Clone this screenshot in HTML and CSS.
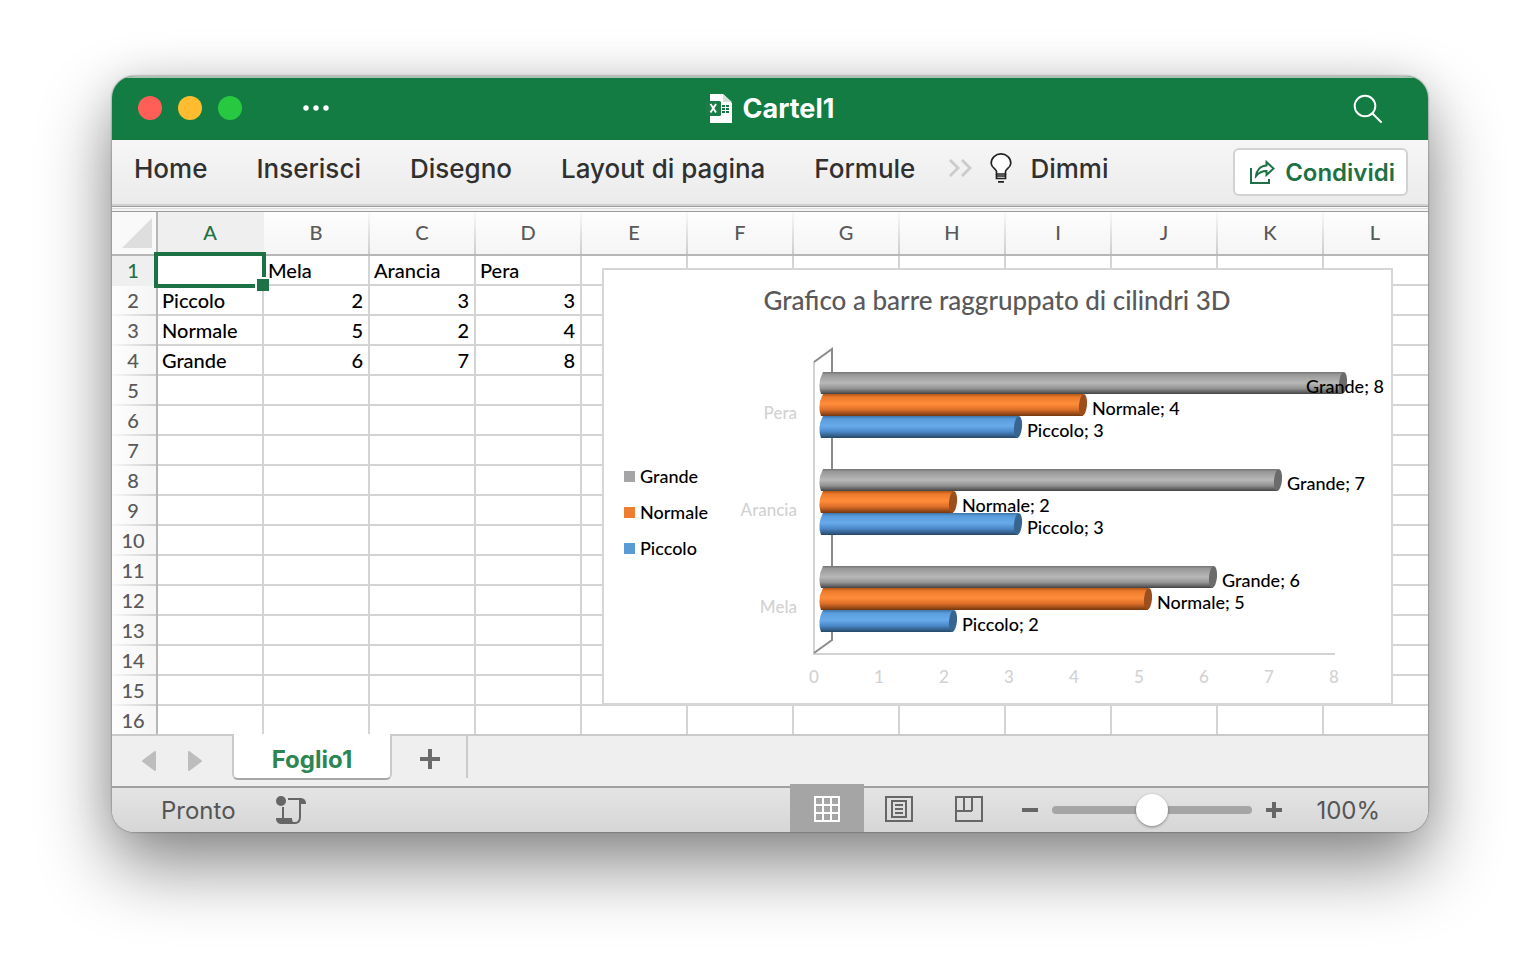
FILE: index.html
```html
<!DOCTYPE html>
<html lang="it">
<head>
    <meta charset="UTF-8">
    <meta name="viewport" content="width=device-width, initial-scale=1.0">
    <title>Cartel1</title>
    <link rel="stylesheet" href="styles.css">
</head>
<body>
    <main class="window">
        <!-- Title bar -->
        <header class="titlebar">
            <div class="controls">
                <button class="dot red" aria-label="Chiudi"></button>
                <button class="dot yellow" aria-label="Riduci"></button>
                <button class="dot green" aria-label="Ingrandisci"></button>
                <button class="more" aria-label="Altro">
                    <svg width="26" height="6" viewBox="0 0 26 6" fill="#fff"><circle cx="3" cy="3" r="2.7"/><circle cx="13" cy="3" r="2.7"/><circle cx="23" cy="3" r="2.7"/></svg>
                </button>
            </div>
            <h1 class="title">
                <svg width="26" height="30" viewBox="0 0 26 30">
                    <path d="M4 0h13l9 9v20H4z" fill="#fff"/>
                    <path d="M17 0v8h9z" fill="#cfe0d6"/>
                    <rect x="0" y="7" width="15" height="15" rx="1.5" fill="#1c7c47"/>
                    <path d="M4.500 10l5.500 8.500M10 10l-5.500 8.500" stroke="#fff" stroke-width="1.900"/>
                    <path d="M16 11h3v2h-3zM20 11h3v2h-3zM16 14h3v2h-3zM20 14h3v2h-3zM16 17h3v2h-3zM20 17h3v2h-3z" fill="#17733f"/>
                </svg>
                Cartel1
            </h1>
            <button class="search" aria-label="Cerca">
                <svg width="30" height="30" viewBox="0 0 30 30" fill="none" stroke="#fff" stroke-width="2" stroke-linecap="round"><circle cx="12" cy="12" r="10.300"/><path d="M19.500 19.500l8.500 8.500"/></svg>
            </button>
        </header>

        <!-- Ribbon tabs -->
        <div class="ribbon">
            <nav class="ribbon-tabs">
                <button>Home</button>
                <button>Inserisci</button>
                <button>Disegno</button>
                <button>Layout di pagina</button>
                <button>Formule</button>
            </nav>
            <button class="overflow" aria-label="Altre schede">
                <svg width="24" height="18" viewBox="0 0 24 18" fill="none" stroke="#cbcbcb" stroke-width="2.800"><path d="M2 1l8 8-8 8M14 1l8 8-8 8"/></svg>
            </button>
            <button class="tell">
                <svg width="22" height="30" viewBox="0 0 22 30" fill="none" stroke="#222" stroke-width="1.700">
                    <path d="M6.500 21v-2.500C6.500 16 1.200 14.800 1.200 10.200a9.800 9.300 0 0 1 19.600 0c0 4.600-5.300 5.800-5.300 8.300V21z" fill="#fff"/>
                    <path d="M6.500 21v4.500h9V21M6.500 23h9M8 28.800h6"/>
                </svg>
                Dimmi
            </button>
            <button class="share">
                <svg width="26" height="26" viewBox="0 0 26 26" fill="none" stroke="#1e7145" stroke-width="2">
                    <path d="M2 9v15h18v-4"/>
                    <path d="M17.500 3l7 6.500-7 6.500v-4c-4.500 0-7.500 1.500-10.500 5 .5-6 4.500-10.300 10.500-10.500z"/>
                </svg>
                Condividi
            </button>
        </div>
        <div class="splitter"></div>

        <!-- Worksheet -->
        <section class="sheet">
            <table>
                <colgroup>
                    <col class="col-index">
                    <col span="11" class="col-cell">
                    <col>
                </colgroup>
                <thead><tr id="letters"><th class="corner"><svg width="30" height="30" viewBox="0 0 30 30"><path d="M30 0v30H0z" fill="#dedede"/></svg></th></tr></thead>
                <tbody id="rows"></tbody>
            </table>
            <figure class="chart">
                <svg id="chart" width="787" height="433" viewBox="604 270 787 433" role="img" aria-label="Grafico a barre raggruppato di cilindri 3D">
                    <defs>
                        <linearGradient id="grande" x2="0" y2="1">
                            <stop offset="0" stop-color="#747474"/><stop offset=".12" stop-color="#989898"/><stop offset=".5" stop-color="#b8b8b8"/><stop offset=".75" stop-color="#939393"/><stop offset="1" stop-color="#444"/>
                        </linearGradient>
                        <linearGradient id="normale" x2="0" y2="1">
                            <stop offset="0" stop-color="#b45514"/><stop offset=".14" stop-color="#ec7a2c"/><stop offset=".45" stop-color="#ff8d3a"/><stop offset=".7" stop-color="#e07029"/><stop offset="1" stop-color="#74370f"/>
                        </linearGradient>
                        <linearGradient id="piccolo" x2="0" y2="1">
                            <stop offset="0" stop-color="#3d74a8"/><stop offset=".14" stop-color="#5a9cdb"/><stop offset=".45" stop-color="#68abeb"/><stop offset=".7" stop-color="#4c8aca"/><stop offset="1" stop-color="#264868"/>
                        </linearGradient>
                    </defs>
                    <text class="chart-title" x="997" y="310">Grafico a barre raggruppato di cilindri 3D</text>
                    <g fill="none" stroke-width="2">
                        <path d="M814 362v292h521" stroke="#d3d3d3"/>
                        <path d="M814 362l18-13v291l-18 13" stroke="#8b8b8b"/>
                    </g>
                </svg>
            </figure>
        </section>

        <!-- Sheet tabs -->
        <nav class="tabs">
            <button class="arrow" aria-label="Foglio precedente"><svg width="14" height="20" viewBox="0 0 14 20"><path d="M13 1v18L1 10z" fill="#bdbdbd" stroke="#bdbdbd" stroke-width="2" stroke-linejoin="round"/></svg></button>
            <button class="arrow" aria-label="Foglio successivo"><svg width="14" height="20" viewBox="0 0 14 20"><path d="M1 1v18l12-9z" fill="#bdbdbd" stroke="#bdbdbd" stroke-width="2" stroke-linejoin="round"/></svg></button>
            <button class="tab">Foglio1</button>
            <button class="add" aria-label="Nuovo foglio"><svg width="20" height="20" viewBox="0 0 20 20"><path d="M10 0v20M0 10h20" stroke="#6b6b6b" stroke-width="4"/></svg></button>
        </nav>

        <!-- Status bar -->
        <footer class="status">
            <span class="ready">Pronto</span>
            <button class="macro" aria-label="Registra macro">
                <svg width="30" height="28" viewBox="0 0 30 28">
                    <circle cx="5" cy="5" r="5" fill="#666"/>
                    <path d="M12 3h13M7 11v12M24 4v17c0 4-2 6-5 6H6" fill="none" stroke="#666" stroke-width="2"/>
                    <path d="M24 2c4 0 6 2 6 6h-6zM0 22h16c0 3 1 5 3 6H6c-4 0-6-2-6-6z" fill="#666"/>
                </svg>
            </button>
            <div class="views">
                <button class="active" aria-label="Normale">
                    <svg width="28" height="26" viewBox="0 0 28 26" fill="none" stroke="#fff" stroke-width="2"><rect x="2" y="1" width="24" height="24"/><path d="M10 1v24M18 1v24M2 9h24M2 17h24"/></svg>
                </button>
                <button aria-label="Layout di pagina">
                    <svg width="28" height="26" viewBox="0 0 28 26" fill="none" stroke="#666" stroke-width="2"><rect x="1" y="1" width="26" height="24"/><rect x="7" y="5" width="14" height="16"/><path d="M10 9h8M10 13h8M10 17h8"/></svg>
                </button>
                <button aria-label="Anteprima interruzioni di pagina">
                    <svg width="28" height="26" viewBox="0 0 28 26" fill="none" stroke="#666" stroke-width="2"><rect x="1" y="1" width="26" height="24"/><path d="M9 1v14M17 1v14M1 15h16"/></svg>
                </button>
            </div>
            <button class="zoom-step" aria-label="Riduci zoom"><svg width="16" height="16" viewBox="0 0 16 16"><path d="M0 8h16" stroke="#666" stroke-width="4"/></svg></button>
            <input class="zoom" type="range" min="0" max="200" value="100" aria-label="Zoom">
            <button class="zoom-step" aria-label="Aumenta zoom"><svg width="16" height="16" viewBox="0 0 16 16"><path d="M0 8h16M8 0v16" stroke="#666" stroke-width="4"/></svg></button>
            <output class="percent">100%</output>
        </footer>
    </main>

    <script>
        const data = [
            ["", "Mela", "Arancia", "Pera"],
            ["Piccolo", 2, 3, 3],
            ["Normale", 5, 2, 4],
            ["Grande", 6, 7, 8]
        ];
        const columns = "ABCDEFGHIJKL".split("");

        // Worksheet grid
        columns.forEach((letter) => {
            document.getElementById("letters").insertAdjacentHTML("beforeend", `<th scope="col">${letter}</th>`);
        });

        let rows = "";
        for (let r = 0; r < 16; r++) {
            rows += `<tr><th scope="row">${r + 1}</th>`;
            columns.forEach((letter, c) => {
                const value = data[r] && data[r][c] !== undefined ? data[r][c] : "";
                const type = typeof value === "number" ? ' class="number"' : "";
                rows += r + c === 0 ? '<td class="selected"></td>' : `<td${type}>${value}</td>`;
            });
            rows += "</tr>";
        }
        document.getElementById("rows").innerHTML = rows;

        // Chart
        const chart = document.getElementById("chart");
        const series = [
            { name: "Grande", row: 3, color: "#a5a5a5", cap: "#6b6b6b" },
            { name: "Normale", row: 2, color: "#ed7d31", cap: "#9c4f1c" },
            { name: "Piccolo", row: 1, color: "#5b9bd5", cap: "#386590" }
        ];
        let bars = "";
        let labels = "";

        ["Pera", "Arancia", "Mela"].forEach((fruit, g) => {
            labels += `<text class="category" x="797" y="${419 + g * 97}">${fruit}</text>`;
            series.forEach((s, i) => {
                const value = data[s.row][3 - g];
                const y = 372 + g * 97 + i * 22;
                const end = 823 + value * 65;
                bars += `<path d="M823 ${y}H${end}V${y + 22}H821Q817 ${y + 11} 823 ${y}z" fill="url(#${s.name.toLowerCase()})"/>`;
                bars += `<ellipse cx="${end}" cy="${y + 11}" rx="4" ry="11" fill="${s.cap}" transform="rotate(5 ${end} ${y + 11})"/>`;
                const x = Math.min(end + 9, 1306);
                labels += `<text class="value" x="${x}" y="${y + 21}">${s.name}; ${value}</text>`;
            });
        });
        for (let n = 0; n <= 8; n++) {
            labels += `<text class="tick" x="${814 + n * 65}" y="683">${n}</text>`;
        }
        series.forEach((s, i) => {
            labels += `<rect x="624" y="${471 + i * 36}" width="11" height="11" fill="${s.color}"/>`;
            labels += `<text class="value" x="640" y="${483 + i * 36}">${s.name}</text>`;
        });
        chart.insertAdjacentHTML("beforeend", bars + labels);
    </script>
</body>
</html>
```
FILE: styles.css
```css
* {
    box-sizing: border-box;
}

body {
    margin: 0;
    min-height: 100vh;
    padding: 76px 112px;
    background: #fff;
    font-family: Inter, sans-serif;
    color: #303030;
}

button {
    padding: 0;
    border: none;
    background: none;
    font: inherit;
    color: inherit;
}

svg {
    display: block;
}

.window {
    border-radius: 22px;
    overflow: hidden;
    box-shadow: 0 0 2px rgba(0, 0, 0, 0.6), 0 34px 72px rgba(0, 0, 0, 0.46), 0 0 40px rgba(0, 0, 0, 0.1);
}

/* Title bar */
.titlebar {
    display: grid;
    grid-template-columns: 1fr auto 1fr;
    align-items: center;
    height: 64px;
    padding: 0 45px 0 26px;
    border-top: 2px solid #a9c4b4;
    background: #127c43;
    color: #fff;
}

.controls {
    display: flex;
    align-items: center;
    gap: 16px;
    padding-bottom: 2px;
}

.dot {
    width: 24px;
    height: 24px;
    border-radius: 50%;
}

.red { background: #ff5f57; }
.yellow { background: #febc2e; }
.green { background: #28c840; }

.more {
    margin-left: 45px;
}

.title {
    display: flex;
    align-items: center;
    gap: 11px;
    margin: 0 0 0 19px;
    font-size: 27px;
    line-height: 32px;
    font-weight: 700;
}

.search {
    justify-self: end;
}

/* Ribbon */
.ribbon {
    display: flex;
    align-items: center;
    height: 64px;
    padding: 0 20px 0 22px;
    background: linear-gradient(#f6f6f6, #ebebeb);
    font-size: 26px;
    font-weight: 500;
    white-space: nowrap;
}

.ribbon-tabs,
.overflow,
.tell {
    padding-bottom: 8px;
}

.ribbon-tabs {
    display: flex;
    gap: 49px;
}

.overflow {
    margin-left: 33px;
}

.tell {
    display: flex;
    align-items: center;
    gap: 18px;
    margin-left: 18px;
}

.share {
    display: flex;
    align-items: center;
    gap: 10px;
    height: 48px;
    margin-left: auto;
    padding: 0 11px 0 14px;
    border: 2px solid #d2d2d2;
    border-radius: 6px;
    background: #fff;
    font-size: 24px;
    font-weight: 600;
    color: #1e7145;
}

.splitter {
    height: 8px;
    background: linear-gradient(#d0d0d0 2px, #9c9c9c 2px 3px, #fafafa 3px 4px, #dcdcdc 4px 5px, #f4f4f4 5px 7px, #9c9c9c 7px);
}

/* Worksheet */
.sheet {
    position: relative;
    overflow: hidden;
    background: #fff;
}

table {
    width: 100%;
    table-layout: fixed;
    border-spacing: 0;
    font-family: Lato, sans-serif;
    font-size: 20px;
    font-weight: 500;
    line-height: 24px;
    color: #000;
}

.col-index { width: 46px; }
.col-cell { width: 106px; }

th {
    padding: 0 2px 2px 0;
    font-weight: 500;
    color: #595959;
}

thead th {
    height: 44px;
    border-bottom: 2px solid #b6b6b6;
    background: linear-gradient(#f8f8f8, #cdcdcd) right / 2px 100% no-repeat, linear-gradient(#fdfdfd, #f5f5f5);
}

thead th:last-child {
    background: linear-gradient(#fdfdfd, #f5f5f5);
}

thead th:nth-child(2) {
    background: #efefef;
    color: #1e7145;
}

thead .corner {
    padding: 0;
    border-right: 2px solid #b6b6b6;
    background: #f9f9f9;
}

.corner svg {
    margin-left: 10px;
}

tbody th {
    height: 30px;
    border-right: 2px solid #b6b6b6;
    background: linear-gradient(90deg, #f8f8f8, #cdcdcd) bottom / 100% 2px no-repeat, linear-gradient(90deg, #fdfdfd, #f5f5f5);
}

tbody tr:first-child th {
    background: #efefef;
    color: #1e7145;
}

td {
    height: 30px;
    padding: 0 5px 0 4px;
    border-right: 2px solid #d4d4d4;
    border-bottom: 2px solid #d4d4d4;
}

td:last-child {
    border-right: none;
}

tbody tr:last-child th,
tbody tr:last-child td {
    height: 28px;
    padding-bottom: 0;
    border-bottom: none;
}

tbody tr:last-child th {
    background: linear-gradient(90deg, #fdfdfd, #f5f5f5);
}

.number {
    text-align: right;
}

.selected {
    position: relative;
}

.selected::before {
    content: "";
    position: absolute;
    inset: -4px;
    border: 4px solid #1e7145;
}

.selected::after {
    content: "";
    position: absolute;
    right: -7px;
    bottom: -7px;
    width: 12px;
    height: 12px;
    border: solid #fff;
    border-width: 2px 0 0 2px;
    background: #1e7145;
}

/* Chart floating over the cells */
.chart {
    position: absolute;
    top: 56px;
    left: 490px;
    margin: 0;
    border: 2px solid #d6d6d6;
    background: #fff;
    font-family: Lato, sans-serif;
    font-weight: 500;
}

.chart-title {
    font-size: 26px;
    text-anchor: middle;
    fill: #595959;
}

.value {
    font-size: 18px;
}

.category,
.tick {
    font-size: 17px;
    fill: #d2d2d2;
}

.category {
    text-anchor: end;
}

.tick {
    text-anchor: middle;
}

/* Sheet tabs */
.tabs {
    display: flex;
    align-items: center;
    height: 52px;
    padding-left: 30px;
    border-top: 2px solid #cacaca;
    background: #efefef;
}

.arrow {
    margin-right: 32px;
}

.arrow + .arrow {
    margin-right: 30px;
}

.tab {
    align-self: flex-start;
    width: 160px;
    height: 46px;
    margin-top: -2px;
    padding-top: 6px;
    border: solid #cacaca;
    border-width: 0 2px 2px;
    border-bottom-color: #a6a6a6;
    border-radius: 0 0 6px 6px;
    background: #fff;
    font-size: 24px;
    font-weight: 700;
    color: #2c8653;
}

.add {
    display: flex;
    align-items: center;
    align-self: flex-start;
    height: 42px;
    padding: 4px 26px 0 28px;
    border-right: 2px solid #cacaca;
}

/* Status bar */
.status {
    display: flex;
    align-items: center;
    height: 46px;
    padding: 0 48px 0 49px;
    border-top: 2px solid #a0a0a0;
    background: linear-gradient(#e4e4e4, #d6d6d6);
    font-size: 24px;
    color: #555;
}

.macro {
    margin-left: 40px;
}

.views {
    display: flex;
    align-self: stretch;
    margin: -4px 18px 0 auto;
}

.views button {
    display: grid;
    place-items: center;
    width: 70px;
    padding-top: 2px;
}

.views .active {
    width: 74px;
    background: #a5a5a5;
}

.zoom {
    width: 200px;
    height: 32px;
    margin: 0 14px;
    appearance: none;
    background: none;
}

.zoom::-webkit-slider-runnable-track {
    height: 8px;
    border-radius: 4px;
    background: #a5a5a5;
}

.zoom::-webkit-slider-thumb {
    appearance: none;
    width: 32px;
    height: 32px;
    margin-top: -12px;
    border-radius: 50%;
    background: #fff;
    box-shadow: 0 1px 3px rgba(0, 0, 0, 0.4);
}

.percent {
    margin-left: 34px;
}
```
